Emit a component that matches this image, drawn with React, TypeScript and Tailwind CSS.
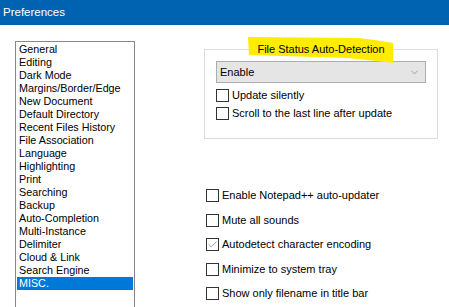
import { Check, ChevronDown } from "lucide-react";

const pages = [
  "General",
  "Editing",
  "Dark Mode",
  "Margins/Border/Edge",
  "New Document",
  "Default Directory",
  "Recent Files History",
  "File Association",
  "Language",
  "Highlighting",
  "Print",
  "Searching",
  "Backup",
  "Auto-Completion",
  "Multi-Instance",
  "Delimiter",
  "Cloud & Link",
  "Search Engine",
  "MISC.",
];

const miscOptions = [
  { label: "Enable Notepad++ auto-updater", checked: false },
  { label: "Mute all sounds", checked: false },
  { label: "Autodetect character encoding", checked: true },
  { label: "Minimize to system tray", checked: false },
  { label: "Show only filename in title bar", checked: false },
];

function CheckBox({ label, checked }: { label: string; checked?: boolean }) {
  return (
    <div className="flex items-center gap-[3px]">
      <div className="flex h-[13px] w-[13px] items-center justify-center border border-[#333333] bg-white">
        {checked && <Check className="h-[11px] w-[11px] text-[#555555]" strokeWidth={1.3} />}
      </div>
      <span className="text-[11px] leading-[13px] text-black">{label}</span>
    </div>
  );
}

export default function App() {
  return (
    <div className="h-[307px] w-[449px] overflow-hidden bg-white font-['Liberation_Sans',Arial,sans-serif]">
      <div className="flex h-[25px] items-center bg-[#0063b1] pl-[3px] text-[11.5px] text-white">
        Preferences
      </div>
      <div className="flex">
        <div className="ml-[15px] mt-[16px] h-[280px] w-[120px] border border-[#828790] p-px">
          {pages.map((p) => (
            <div
              key={p}
              className={
                p === "MISC."
                  ? "h-[13px] bg-[#0078d7] pl-[2px] text-[10.75px] leading-[13px] text-white"
                  : "h-[13px] pl-[2px] text-[10.75px] leading-[13px] text-black"
              }
            >
              {p}
            </div>
          ))}
        </div>

        <div className="ml-[69px] flex w-[234px] flex-col">
          <div className="relative mt-[24px] h-[90px] border border-[#dcdcdc] px-[11px] pt-[11px]">
            {/* yellow highlighter stroke over the group title */}
            <svg className="absolute left-[42px] top-[-13px]" width="147" height="27" viewBox="0 0 147 27">
              <path d="M1 0 L112 1 Q130 3 146 6 L146 26 Q120 23 100 21 L2 18 Z" fill="#ffec00" />
            </svg>
            <span className="absolute left-1/2 top-[-8px] -translate-x-1/2 whitespace-nowrap text-[11px] leading-[14px] text-black">
              File Status Auto-Detection
            </span>
            <div className="flex h-[22px] items-center justify-between border border-[#adadad] bg-[#e5e5e5] pl-[3px] pr-[5px] text-[11px]">
              <span>Enable</span>
              <ChevronDown className="h-[11px] w-[11px] text-[#666666]" strokeWidth={1.2} />
            </div>
            <div className="mt-[6px] flex flex-col gap-[5px]">
              <CheckBox label="Update silently" />
              <CheckBox label="Scroll to the last line after update" />
            </div>
          </div>

          <div className="ml-[2px] mt-[50px] flex flex-col gap-[11.5px]">
            {miscOptions.map((o) => (
              <CheckBox key={o.label} label={o.label} checked={o.checked} />
            ))}
          </div>
        </div>
      </div>
    </div>
  );
}
